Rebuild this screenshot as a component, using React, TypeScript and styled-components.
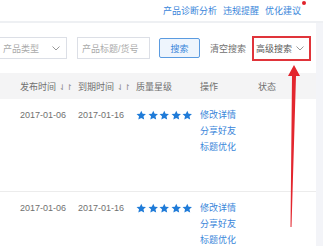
import styled, { createGlobalStyle } from "styled-components";

const GlobalStyle = createGlobalStyle`
  html, body {
    margin: 0;
    padding: 0;
    background: #f3f4f8;
    overflow: hidden;
  }
  body {
    font-family: "Liberation Sans", "Noto Sans CJK SC", sans-serif;
    font-size: 9px;
    color: #707070;
  }
`;

const Page = styled.div`
  position: relative;
  width: 323px;
  height: 246px;
  overflow: hidden;
`;

const TopBar = styled.div`
  height: 21px;
  background: #fff;
  border-bottom: 2px solid #eef0f3;
  display: flex;
  justify-content: flex-end;
  align-items: center;
  gap: 6px;
  padding-right: 22px;
`;

const TopLink = styled.a<{ $dot?: boolean }>`
  position: relative;
  color: #3a86da;
  text-decoration: none;
  &::after {
    content: "";
    display: ${(p) => (p.$dot ? "block" : "none")};
    position: absolute;
    right: -5px;
    top: -3px;
    width: 4px;
    height: 4px;
    border-radius: 50%;
    background: #e0222a;
  }
`;

const Panel = styled.div`
  width: 316px;
  background: #fff;
  height: 223px;
`;

const SearchRow = styled.div`
  height: 50px;
  display: flex;
  align-items: center;
`;

const Select = styled.div<{ $w: number; $noLeft?: boolean }>`
  box-sizing: border-box;
  width: ${(p) => p.$w}px;
  height: 22px;
  border: 1px solid #dcdfe6;
  border-left: ${(p) => (p.$noLeft ? "none" : "1px solid #dcdfe6")};
  display: flex;
  align-items: center;
  justify-content: space-between;
  padding: 0 6px 0 3px;
  color: #aaa;
`;

const Chevron = () => (
  <svg width="8" height="5" viewBox="0 0 8 5">
    <path d="M0.5 0.5 L4 4 L7.5 0.5" fill="none" stroke="#999" strokeWidth="1" />
  </svg>
);

const Input = styled.div`
  box-sizing: border-box;
  width: 73px;
  height: 22px;
  border: 1px solid #dcdfe6;
  margin-left: 10px;
  display: flex;
  align-items: center;
  padding-left: 4px;
  color: #aaa;
`;

const SearchButton = styled.button`
  box-sizing: border-box;
  width: 41px;
  height: 20px;
  margin-left: 9px;
  border: 1px solid #5b9be0;
  border-radius: 2px;
  background: #eef5fd;
  color: #3a86da;
  font: inherit;
  padding: 0;
`;

const ClearLink = styled.span`
  margin-left: 10px;
  color: #707070;
`;

const Highlight = styled.div`
  box-sizing: border-box;
  margin-left: 6px;
  width: 59px;
  height: 25px;
  border: 2px solid #e0343a;
  display: flex;
  align-items: center;
  justify-content: space-between;
  padding: 0 5px 0 2px;
  color: #5a5a5a;
`;

const Grid = styled.div`
  display: grid;
  grid-template-columns: 58px 58px 64px 58px 1fr;
  padding-left: 20px;
`;

const HeaderRow = styled(Grid)`
  height: 26px;
  align-items: center;
  background: #f4f4f5;
  color: #707070;
`;

const SortMark = styled.span`
  margin-left: 3px;
  color: #8a8a8a;
  font-size: 8px;
`;

const Row = styled(Grid)<{ $h: number }>`
  height: ${(p) => p.$h}px;
  padding-top: 8px;
  box-sizing: border-box;
  line-height: 16px;
  border-bottom: 1px solid #ececec;
  color: #707070;
`;

const Stars = styled.div`
  display: flex;
  gap: 1px;
  padding-top: 3px;
`;

const Actions = styled.div`
  display: flex;
  flex-direction: column;
  color: #3a86da;
`;

const Star = () => (
  <svg width="10.5" height="10.5" viewBox="0 0 24 24">
    <path
      d="M12 1.5l3.2 7 7.6.8-5.7 5.1 1.6 7.5L12 18l-6.7 3.9 1.6-7.5L1.2 9.3l7.6-.8z"
      fill="#1f7bd8"
    />
  </svg>
);

const Arrow = styled.svg`
  position: absolute;
  left: 284px;
  top: 61px;
`;

const rows = [
  { pub: "2017-01-06", exp: "2017-01-16", h: 93 },
  { pub: "2017-01-06", exp: "2017-01-16", h: 60 },
];

export default function App() {
  return (
    <Page>
      <GlobalStyle />
      <TopBar>
        <TopLink>产品诊断分析</TopLink>
        <TopLink>违规提醒</TopLink>
        <TopLink $dot>优化建议</TopLink>
      </TopBar>
      <Panel>
        <SearchRow>
          <Select $w={67} $noLeft>
            <span>产品类型</span>
            <Chevron />
          </Select>
          <Input>产品标题/货号</Input>
          <SearchButton>搜索</SearchButton>
          <ClearLink>清空搜索</ClearLink>
          <Highlight>
            <span>高级搜索</span>
            <Chevron />
          </Highlight>
        </SearchRow>
        <HeaderRow>
          <span>
            发布时间<SortMark>⇃↾</SortMark>
          </span>
          <span>
            到期时间<SortMark>⇃↾</SortMark>
          </span>
          <span>质量星级</span>
          <span>操作</span>
          <span>状态</span>
        </HeaderRow>
        {rows.map((r, i) => (
          <Row key={i} $h={r.h}>
            <span>{r.pub}</span>
            <span>{r.exp}</span>
            <Stars>
              <Star />
              <Star />
              <Star />
              <Star />
              <Star />
            </Stars>
            <Actions>
              <span>修改详情</span>
              <span>分享好友</span>
              <span>标题优化</span>
            </Actions>
            <span />
          </Row>
        ))}
      </Panel>
      <Arrow width="20" height="172" viewBox="0 0 20 172">
        <path d="M10 4 L16 15 L12 15 L7.5 166 L6.5 166 L8 15 L4 15 Z" fill="#e3262e" />
      </Arrow>
    </Page>
  );
}
